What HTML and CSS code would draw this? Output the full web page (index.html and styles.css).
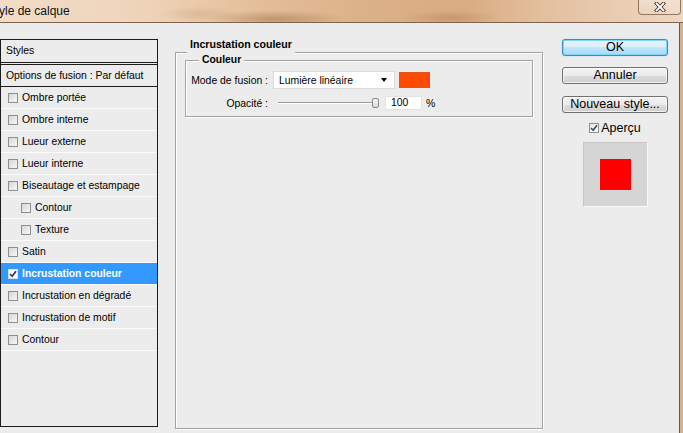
FILE: index.html
```html
<!DOCTYPE html>
<html lang="fr">
<head>
<meta charset="utf-8">
<title>Style de calque</title>
<link rel="stylesheet" href="styles.css">
</head>
<body>
<div class="window">
  <div class="titlebar">
    <span class="title">yle de calque</span>
    <button class="close" type="button" aria-label="Fermer">
      <svg width="12" height="10" viewBox="0 0 12 10"><path d="M2.5 1.5 L9.5 8.5 M9.5 1.5 L2.5 8.5" stroke="#4a3426" stroke-width="3.6" stroke-linecap="square" fill="none"/><path d="M2.5 1.5 L9.5 8.5 M9.5 1.5 L2.5 8.5" stroke="#ffffff" stroke-width="1.8" stroke-linecap="square" fill="none"/></svg>
    </button>
  </div>
  <div class="frame">
    <div class="body">
      <div class="styles-panel">
        <div class="panel-head">Styles</div>
        <div class="panel-opts">Options de fusion : Par défaut</div>
        <ul class="fx-list">
          <li class="fx"><span class="cb"></span>Ombre portée</li>
          <li class="fx"><span class="cb"></span>Ombre interne</li>
          <li class="fx"><span class="cb"></span>Lueur externe</li>
          <li class="fx"><span class="cb"></span>Lueur interne</li>
          <li class="fx"><span class="cb"></span>Biseautage et estampage</li>
          <li class="fx sub"><span class="cb"></span>Contour</li>
          <li class="fx sub"><span class="cb"></span>Texture</li>
          <li class="fx"><span class="cb"></span>Satin</li>
          <li class="fx active"><span class="cb checked"><svg width="8" height="8" viewBox="0 0 8 8"><path d="M1 4 L3.2 6.3 L7 1.2" stroke="#2f3a4a" stroke-width="1.7" fill="none"/></svg></span>Incrustation couleur</li>
          <li class="fx"><span class="cb"></span>Incrustation en dégradé</li>
          <li class="fx"><span class="cb"></span>Incrustation de motif</li>
          <li class="fx"><span class="cb"></span>Contour</li>
        </ul>
      </div>

      <div class="group outer">
        <div class="group-title">Incrustation couleur</div>
        <div class="group inner">
          <div class="group-title">Couleur</div>
          <div class="form">
            <span class="label">Mode de fusion :</span>
            <div class="ctrl">
              <div class="select"><span>Lumière linéaire</span><span class="arrow"></span></div>
              <span class="swatch"></span>
            </div>
            <span class="label">Opacité :</span>
            <div class="ctrl">
              <div class="slider"><span class="thumb"></span></div>
              <span class="num">100</span>
              <span class="pct">%</span>
            </div>
          </div>
        </div>
      </div>

      <div class="actions">
        <button class="btn default" type="button">OK</button>
        <button class="btn b2" type="button">Annuler</button>
        <button class="btn b3" type="button">Nouveau style...</button>
        <label class="preview-check"><span class="cb checked"><svg width="8" height="8" viewBox="0 0 8 8"><path d="M1 4 L3.2 6.3 L7 1.2" stroke="#3d4f6b" stroke-width="1.7" fill="none"/></svg></span>Aperçu</label>
        <div class="preview"><span class="preview-fill"></span></div>
      </div>
    </div>
  </div>
</div>
</body>
</html>
```

FILE: styles.css
```css
* { box-sizing: border-box; }
html, body { margin: 0; padding: 0; }
body {
  width: 683px;
  height: 433px;
  overflow: hidden;
  font-family: "Liberation Sans", Arial, sans-serif;
  font-size: 10.4px;
  color: #000;
}

.window {
  height: 433px;
  display: flex;
  flex-direction: column;
}

.titlebar {
  height: 23px;
  flex: none;
  display: flex;
  align-items: flex-start;
  justify-content: space-between;
  border-bottom: 1px solid #7d6451;
  background:
    radial-gradient(ellipse 70px 9px at 275px 19px, rgba(150, 100, 60, 0.45), transparent),
    radial-gradient(ellipse 50px 8px at 450px 18px, rgba(165, 115, 75, 0.35), transparent),
    radial-gradient(ellipse 40px 8px at 200px 14px, rgba(200, 160, 120, 0.4), transparent),
    linear-gradient(90deg, #f2ddc8 0%, #eed3b8 22%, #e4be98 38%, #dcb28a 52%, #d9ac82 68%, #e3c09f 80%, #eed7c1 100%);
}

.title {
  font-size: 12px;
  line-height: 22px;
  margin-left: -1px;
  color: #111;
}

.close {
  width: 43px;
  height: 16px;
  margin: -1px 2px 0 0;
  padding: 0;
  border: 1px solid rgba(80, 52, 30, 0.6);
  border-top: none;
  border-radius: 0 0 4px 4px;
  background: linear-gradient(rgba(255, 255, 255, 0.3), rgba(255, 255, 255, 0.08));
  display: flex;
  align-items: center;
  justify-content: center;
}

.frame {
  flex: 1;
  display: flex;
  padding-right: 3px;
  background: #d7b18b;
}

.body {
  flex: 1;
  display: flex;
  align-items: flex-start;
  background: #ececec;
  border-right: 1px solid #6e533e;
}

/* left list */
.styles-panel {
  width: 158px;
  height: 388px;
  margin-top: 16px;
  border: 1px solid #1c1c1c;
  flex: none;
}
.panel-head {
  height: 25px;
  padding-left: 5px;
  line-height: 22px;
  border-bottom: 3px double #1c1c1c;
}
.panel-opts {
  height: 22px;
  padding-left: 5px;
  line-height: 21px;
  border-bottom: 1px solid #1c1c1c;
}
.fx-list {
  list-style: none;
  margin: 0;
  padding: 0;
}
.fx {
  height: 22px;
  display: flex;
  align-items: center;
  gap: 4px;
  padding-left: 7px;
  border-bottom: 1px solid #fbfbfb;
}
.fx.sub { padding-left: 20px; }
.fx.active {
  background: #3399ff;
  color: #fff;
  font-weight: bold;
}

.cb {
  width: 10px;
  height: 10px;
  flex: none;
  border: 1px solid #8f8f8f;
  background: linear-gradient(135deg, #d6d6d6, #f7f7f7);
  display: flex;
  align-items: center;
  justify-content: center;
}
.cb.checked { background: linear-gradient(135deg, #e6e6e6, #ffffff); }
.fx.active .cb { border-color: #cfe3f7; background: #fff; }

/* group boxes */
.group {
  border: 1px solid #a3a3a3;
  box-shadow: inset 1px 1px 0 #fff, 1px 1px 0 #fff;
}
.group-title {
  width: max-content;
  background: #ececec;
  padding: 0 3px;
  font-weight: bold;
  line-height: 14px;
}
.outer {
  width: 368px;
  height: 377px;
  margin: 29px 0 0 17px;
  padding: 0 9px;
  flex: none;
}
.outer > .group-title {
  margin: -16px 0 0 2px;
  padding-bottom: 3px;
  font-size: 10.6px;
}
.inner {
  margin-top: 6px;
  padding: 0 0 6px;
}
.inner > .group-title {
  margin: -8px 0 0 13px;
}

.form {
  margin-top: 4px;
  display: grid;
  grid-template-columns: 82px auto;
  column-gap: 5px;
  row-gap: 7px;
  align-items: center;
}
.label { text-align: right; }
.ctrl {
  display: flex;
  align-items: center;
}
.select {
  width: 122px;
  height: 18px;
  background: #fff;
  border: 1px solid #dcdcdc;
  padding-left: 5px;
  display: flex;
  align-items: center;
  justify-content: space-between;
}
.arrow {
  width: 0;
  height: 0;
  border-left: 3.5px solid transparent;
  border-right: 3.5px solid transparent;
  border-top: 4px solid #000;
  margin-right: 7px;
}
.swatch {
  width: 31px;
  height: 16px;
  margin-left: 4px;
  background: #fd4b03;
  border: 1px solid #d9541e;
}
.slider {
  width: 101px;
  height: 14px;
  margin-left: 5px;
  display: flex;
  align-items: center;
  justify-content: flex-end;
  background: linear-gradient(transparent 6px, #9a9a9a 6px, #9a9a9a 7px, #fff 7px, #fff 8px, transparent 8px);
}
.thumb {
  width: 7px;
  height: 10px;
  border: 1px solid #8a8a8a;
  border-radius: 2px;
  background: linear-gradient(#fafafa, #d8d8d8);
}
.num {
  width: 37px;
  height: 14px;
  margin-left: 6px;
  padding-left: 5px;
  line-height: 12px;
  background: #fff;
  border: 1px solid #e2e2e2;
}
.pct { margin-left: 4px; }

/* right column */
.actions {
  width: 106px;
  margin: 16px 0 0 19px;
  flex: none;
  display: flex;
  flex-direction: column;
  align-items: center;
}
.btn {
  width: 106px;
  height: 17px;
  padding: 0;
  font-family: "Liberation Sans", Arial, sans-serif;
  font-size: 12.5px;
  line-height: 15px;
  color: #000;
  border: 1px solid #707070;
  border-radius: 3px;
  background: linear-gradient(#f2f2f2, #ebebeb 50%, #dddddd 50%, #cfcfcf);
  box-shadow: inset 0 0 0 1px rgba(255, 255, 255, 0.7);
}
.btn.default {
  border-color: #3c8dbf;
  background: linear-gradient(#eaf6fd, #d9f0fc 50%, #bee6fd 50%, #a7d9f5);
  box-shadow: inset 0 0 0 1px #7fd4f8, 0 0 1px #5fbdea;
}
.b2 { margin-top: 11px; }
.b3 { margin-top: 12px; }
.preview-check {
  height: 14px;
  margin-top: 8px;
  display: flex;
  align-items: center;
  gap: 2px;
  font-size: 12.5px;
}
.preview {
  width: 65px;
  height: 65px;
  margin-top: 7px;
  background: #d5d5d5;
  border: 1px solid;
  border-color: #c6c6c6 #fafafa #fafafa #c6c6c6;
  display: flex;
  align-items: center;
  justify-content: center;
}
.preview-fill {
  width: 31px;
  height: 31px;
  background: #ff0000;
}
```
